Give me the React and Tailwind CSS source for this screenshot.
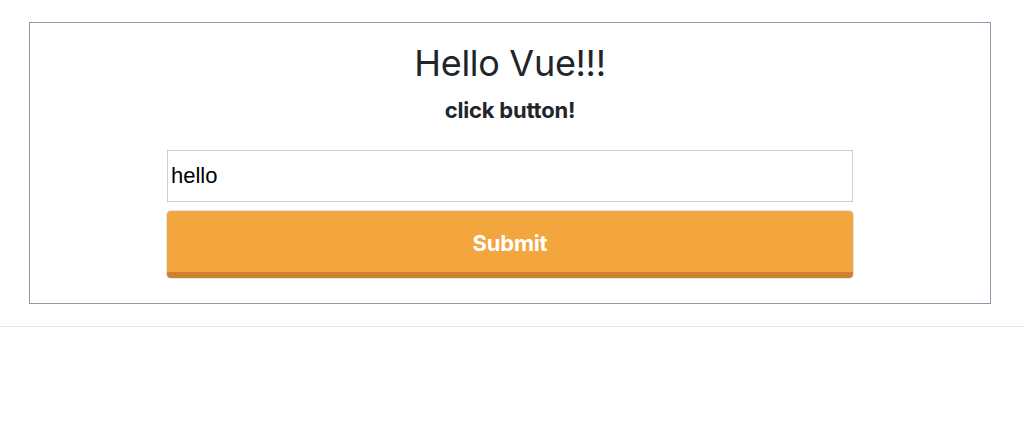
import { useState } from "react";

const App = () => {
    const [text, setText] = useState("hello");

    return (
        <div className="w-full min-h-[447px] bg-white font-['Inter',sans-serif]">
            <div className="pt-[22px] pl-[29px]">
                <div className="w-[962px] border border-[#8e9aab] pt-[19px] pb-[25px] flex flex-col items-center">
                    <h1 className="text-[36px] leading-[43px] text-[#212529] tracking-[-0.3px]">Hello Vue!!!</h1>
                    <h3 className="mt-[13px] text-[22px] leading-[24px] font-bold text-[#212529] tracking-[-0.2px]">click button!</h3>

                    {/* input + button */}
                    <div className="mt-[28px] w-[686px] flex flex-col gap-[9px]">
                        <input
                            type="text"
                            className="w-full h-[52px] px-[3px] border border-[#cfcfcf] text-[22px] text-black font-['Liberation_Sans',sans-serif] outline-none"
                            value={text}
                            onChange={(e) => setText(e.target.value)}
                        />
                        <button className="w-full h-[67px] bg-[#f2a63d] border-b-[6px] border-[#cf822e] rounded-[4px] text-white text-[22px] font-bold pt-[3px] tracking-[-0.2px] shadow-[0_0_0_1px_#e6e6e6]">
                            Submit
                        </button>
                    </div>
                </div>
            </div>

            <div className="mt-[22px] h-px bg-[#e6e6e6]" />
        </div>
    );
};

export default App;
